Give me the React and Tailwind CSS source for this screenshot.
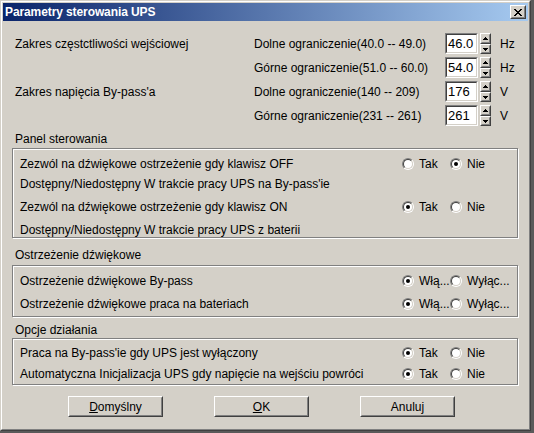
import React from "react";

const F = "font-['Liberation_Sans',Arial,sans-serif]";

function Raised({ className = "", children }) {
  return (
    <div className={`border border-t-white border-l-white border-r-[#404040] border-b-[#404040] bg-[#d4d0c8] ${className}`}>
      <div className="w-full h-full border border-t-[#d4d0c8] border-l-[#d4d0c8] border-r-[#808080] border-b-[#808080] flex items-center justify-center">
        {children}
      </div>
    </div>
  );
}

function Spinner() {
  return (
    <div className="ml-[2px] w-[11px] h-[21px] flex flex-col">
      <Raised className="w-[11px] h-[11px]">
        <svg width="5" height="3" viewBox="0 0 5 3"><path d="M2 0h1v1h1v1h1v1H0V2h1V1h1z" fill="#000" /></svg>
      </Raised>
      <Raised className="w-[11px] h-[10px]">
        <svg width="5" height="3" viewBox="0 0 5 3"><path d="M0 0h5v1H4v1H3v1H2V2H1V1H0z" fill="#000" /></svg>
      </Raised>
    </div>
  );
}

function Input({ value }) {
  return (
    <div className="w-[33px] h-[21px] border border-t-[#808080] border-l-[#808080] border-r-white border-b-white">
      <div className="w-full h-full border border-t-[#404040] border-l-[#404040] border-r-[#d4d0c8] border-b-[#d4d0c8] bg-white flex items-center pl-[1px] text-[13px] leading-none text-black">
        {value}
      </div>
    </div>
  );
}

function Radio({ checked }) {
  return (
    <span className="relative inline-block w-[12px] h-[12px] rounded-full border border-t-[#808080] border-l-[#808080] border-r-white border-b-white shrink-0">
      <span className="absolute inset-0 rounded-full border border-t-[#404040] border-l-[#404040] border-r-[#d4d0c8] border-b-[#d4d0c8] bg-white flex items-center justify-center">
        {checked && <span className="w-[4px] h-[4px] rounded-full bg-black" />}
      </span>
    </span>
  );
}

function RadioPair({ a, b, first }) {
  return (
    <div className="flex items-center">
      <div className="w-[48px] flex items-center">
        <Radio checked={first} />
        <span className="ml-[5px]">{a}</span>
      </div>
      <div className="flex items-center">
        <Radio checked={!first} />
        <span className="ml-[5px]">{b}</span>
      </div>
    </div>
  );
}

function Row({ text, right, className = "" }) {
  return (
    <div className={`h-[14px] flex items-center ${className}`}>
      <div className="w-[382px] whitespace-nowrap">{text}</div>
      {right}
    </div>
  );
}

function Group({ children, className = "" }) {
  return (
    <div className={`ml-[9px] w-[506px] border border-[#808080] shadow-[inset_1px_1px_0_#fff,1px_1px_0_#fff] pl-[7px] ${className}`}>
      {children}
    </div>
  );
}

function Btn({ children }) {
  return (
    <div className="w-[95px] h-[21px] border border-t-white border-l-white border-r-[#404040] border-b-[#404040]">
      <div className="w-full h-full border border-t-[#d4d0c8] border-l-[#d4d0c8] border-r-[#808080] border-b-[#808080] flex items-center justify-center">
        {children}
      </div>
    </div>
  );
}

const topRows = [
  ["Zakres częstctliwości wejściowej", "Dolne ograniczenie(40.0 -- 49.0)", "46.0", "Hz"],
  ["", "Górne ograniczenie(51.0 -- 60.0)", "54.0", "Hz"],
  ["Zakres napięcia By-pass'a", "Dolne ograniczenie(140 -- 209)", "176", "V"],
  ["", "Górne ograniczenie(231 -- 261)", "261", "V"],
];

export default function App() {
  return (
    <div className={`w-[534px] h-[433px] bg-[#5a5a5a] overflow-hidden ${F} text-[12px] text-black`}>
      <div className="w-[531px] h-[431px] border border-t-[#d4d0c8] border-l-[#d4d0c8] border-r-[#404040] border-b-[#404040] bg-[#d4d0c8]">
        <div className="w-full h-full border border-t-white border-l-white border-r-[#808080] border-b-[#808080] p-[1px] flex flex-col">
          {/* Title bar */}
          <div className="h-[18px] shrink-0 bg-[linear-gradient(to_right,#0a246a,#a6caf0)] flex items-center pl-[2px] pr-[2px]">
            <span className="text-white font-bold text-[12px] leading-none tracking-[-0.1px]">Parametry sterowania UPS</span>
            <div className="ml-auto w-[16px] h-[14px] border border-t-white border-l-white border-r-[#404040] border-b-[#404040] bg-[#d4d0c8]">
              <div className="w-full h-full border border-t-[#d4d0c8] border-l-[#d4d0c8] border-r-[#808080] border-b-[#808080] flex items-center justify-center">
                <svg width="8" height="7" viewBox="0 0 8 7">
                  <path d="M0 0h2v1h1v1h2V1h1V0h2v1H7v1H6v1H5v1h1v1h1v1h1v1H6V6H5V5H3v1H2v1H0V6h1V5h1V4h1V3H2V2H1V1H0z" fill="#000" />
                </svg>
              </div>
            </div>
          </div>

          {/* Top params */}
          <div className="mt-[12px] flex flex-col gap-[3px]">
            {topRows.map(([l, d, v, u], i) => (
              <div key={i} className="h-[21px] flex items-center">
                <div className="w-[251px] pl-[12px] whitespace-nowrap">{l}</div>
                <div className="w-[191px] whitespace-nowrap">{d}</div>
                <Input value={v} />
                <Spinner />
                <span className="ml-[9px]">{u}</span>
              </div>
            ))}
          </div>

          {/* Panel sterowania */}
          <div className="mt-[6px] h-[14px] leading-[14px] pl-[12px]">Panel sterowania</div>
          <Group className="mt-[2px] h-[90px] pt-[8px]">
            <Row text="Zezwól na dźwiękowe ostrzeżenie gdy klawisz OFF" right={<RadioPair a="Tak" b="Nie" first={false} />} />
            <Row className="mt-[6px]" text="Dostępny/Niedostępny W trakcie pracy UPS na By-pass'ie" />
            <Row className="mt-[9px]" text="Zezwól na dźwiękowe ostrzeżenie gdy klawisz ON" right={<RadioPair a="Tak" b="Nie" first={true} />} />
            <Row className="mt-[9px]" text="Dostępny/Niedostępny W trakcie pracy UPS z baterii" />
          </Group>

          {/* Ostrzeżenie dźwiękowe */}
          <div className="mt-[10px] h-[14px] leading-[14px] pl-[12px]">Ostrzeżenie dźwiękowe</div>
          <Group className="mt-[3px] h-[52px] pt-[8px]">
            <Row text="Ostrzeżenie dźwiękowe By-pass" right={<RadioPair a="Włą..." b="Wyłąc..." first={true} />} />
            <Row className="mt-[9px]" text="Ostrzeżenie dźwiękowe praca na bateriach" right={<RadioPair a="Włą..." b="Wyłąc..." first={true} />} />
          </Group>

          {/* Opcje działania */}
          <div className="mt-[6px] h-[14px] leading-[14px] pl-[12px]">Opcje działania</div>
          <Group className="mt-[1px] h-[47px] pt-[7px]">
            <Row text="Praca na By-pass'ie gdy UPS jest wyłączony" right={<RadioPair a="Tak" b="Nie" first={true} />} />
            <Row className="mt-[7px]" text="Automatyczna Inicjalizacja UPS gdy napięcie na wejściu powróci" right={<RadioPair a="Tak" b="Nie" first={true} />} />
          </Group>

          {/* Buttons */}
          <div className="mt-[11px] ml-[65px] flex gap-[51px]">
            <Btn><span><span className="underline">D</span>omyślny</span></Btn>
            <Btn><span><span className="underline">O</span>K</span></Btn>
            <Btn>Anuluj</Btn>
          </div>
        </div>
      </div>
    </div>
  );
}
